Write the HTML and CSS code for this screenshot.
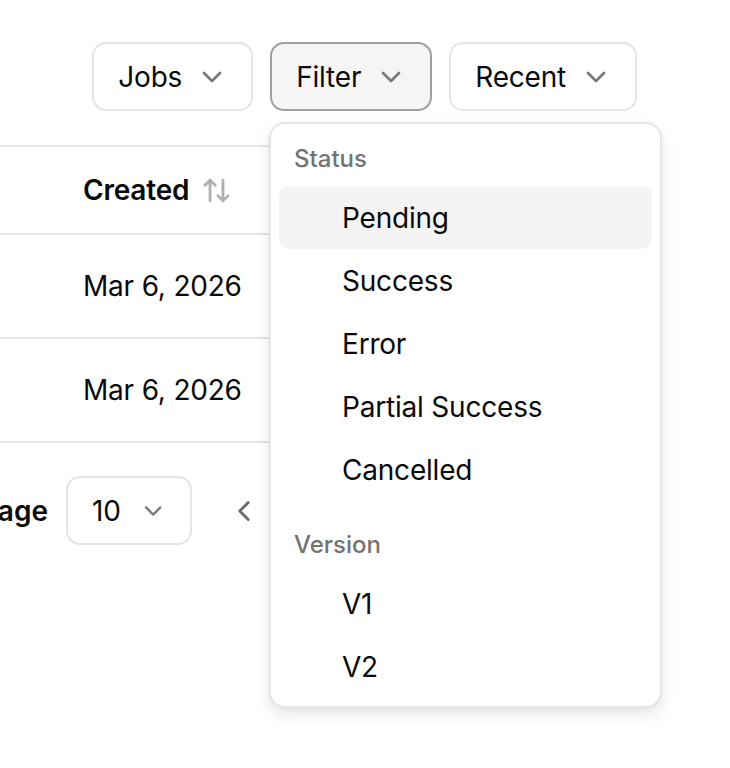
FILE: index.html
```html
<!DOCTYPE html>
<html>
<head>
<meta charset="utf-8">
<link rel="stylesheet" href="styles.css">
</head>
<body>
<div class="page">
  <div class="toolbar">
    <button class="btn">Jobs <svg class="chev" viewBox="0 0 24 24"><path d="m6 9 6 6 6-6"/></svg></button>
    <button class="btn btn-active">Filter <svg class="chev" viewBox="0 0 24 24"><path d="m6 9 6 6 6-6"/></svg></button>
    <button class="btn">Recent <svg class="chev" viewBox="0 0 24 24"><path d="m6 9 6 6 6-6"/></svg></button>
  </div>

  <div class="table">
    <div class="trow thead">
      <div class="cell head-cell">Created
        <svg class="sort" viewBox="0 0 24 24"><path d="m21 16-4 4-4-4"/><path d="M17 20V4"/><path d="m3 8 4-4 4 4"/><path d="M7 4v16"/></svg>
      </div>
    </div>
    <div class="trow tbody-row"><div class="cell">Mar 6, 2026</div></div>
    <div class="trow tbody-row"><div class="cell">Mar 6, 2026</div></div>
  </div>

  <div class="pager">
    <div class="pager-label"><span>Rows per page</span></div>
    <button class="select">10 <svg class="chev" viewBox="0 0 24 24"><path d="m6 9 6 6 6-6"/></svg></button>
    <button class="icon-btn"><svg class="chev-left" viewBox="0 0 24 24"><path d="m15 18-6-6 6-6"/></svg></button>
  </div>

  <div class="menu">
    <div class="menu-label">Status</div>
    <div class="menu-item highlighted">Pending</div>
    <div class="menu-item">Success</div>
    <div class="menu-item">Error</div>
    <div class="menu-item">Partial Success</div>
    <div class="menu-item">Cancelled</div>
    <div class="menu-label group-gap">Version</div>
    <div class="menu-item">V1</div>
    <div class="menu-item">V2</div>
  </div>
</div>
</body>
</html>
```

FILE: styles.css
```css
* { box-sizing: border-box; }
html, body { margin: 0; padding: 0; background: #ffffff; }
body { font-family: "Inter", "Noto Sans", sans-serif; color: #0a0a0a; }

.page {
  position: relative;
  width: 730px;
  height: 768px;
  overflow: hidden;
}

.toolbar {
  display: flex;
  justify-content: flex-end;
  gap: 17px;
  padding: 42px 93px 0 0;
}

.btn, .select {
  display: flex;
  align-items: center;
  gap: 14px;
  height: 69px;
  padding: 0 23px 0 24px;
  border: 2px solid #e5e5e5;
  border-radius: 14px;
  background: #ffffff;
  font-family: inherit;
  font-size: 28px;
  font-weight: 400;
  color: #0a0a0a;
  line-height: 40px;
  letter-spacing: -0.2px;
}

.btn-active {
  background: #f5f5f5;
  border-color: #a0a0a0;
}

.chev {
  width: 32px;
  height: 32px;
  fill: none;
  stroke: #7a7a7a;
  stroke-width: 2;
  stroke-linecap: round;
  stroke-linejoin: round;
}

.table {
  margin-top: 34px;
  width: 640px;
  border-top: 2px solid #e3e6ec;
}

.trow {
  display: flex;
  align-items: center;
  border-bottom: 2px solid #e5e5e5;
  font-size: 28px;
  line-height: 40px;
  letter-spacing: -0.2px;
}

.thead { height: 88px; }
.tbody-row { height: 104px; }

.cell {
  display: flex;
  align-items: center;
  padding-left: 83px;
}

.head-cell {
  font-weight: 600;
  gap: 12px;
}

.sort {
  width: 31px;
  height: 31px;
  fill: none;
  stroke: #b0b0b0;
  stroke-width: 2.2;
  stroke-linecap: round;
  stroke-linejoin: round;
}

.pager {
  display: flex;
  align-items: center;
  margin-top: 33px;
}

.pager-label {
  display: flex;
  justify-content: flex-end;
  width: 48px;
  white-space: nowrap;
  font-size: 28px;
  font-weight: 600;
  line-height: 40px;
  margin-right: 18px;
}

.select {
  width: 126px;
  gap: 18px;
}

.icon-btn {
  display: flex;
  align-items: center;
  justify-content: center;
  width: 34px;
  height: 34px;
  margin-left: 35px;
  padding: 0;
  border: none;
  background: transparent;
}

.chev-left {
  width: 34px;
  height: 34px;
  fill: none;
  stroke: #6b6b6b;
  stroke-width: 2;
  stroke-linecap: round;
  stroke-linejoin: round;
}

.menu {
  position: absolute;
  left: 269px;
  top: 122px;
  width: 393px;
  padding: 8px;
  border: 2px solid #e5e5e5;
  border-radius: 16px;
  background: #ffffff;
  box-shadow: 0 8px 18px rgba(0, 0, 0, 0.08), 0 2px 6px rgba(0, 0, 0, 0.05);
}

.menu-label {
  padding: 11px 15px;
  font-size: 24px;
  font-weight: 500;
  line-height: 32px;
  color: #737373;
}

.group-gap { margin-top: 17px; }

.menu-item {
  padding: 11.5px 16px 11.5px 63px;
  border-radius: 10px;
  font-size: 28px;
  line-height: 40px;
  letter-spacing: -0.2px;
  color: #0a0a0a;
}

.highlighted { background: #f4f4f4; }
```
